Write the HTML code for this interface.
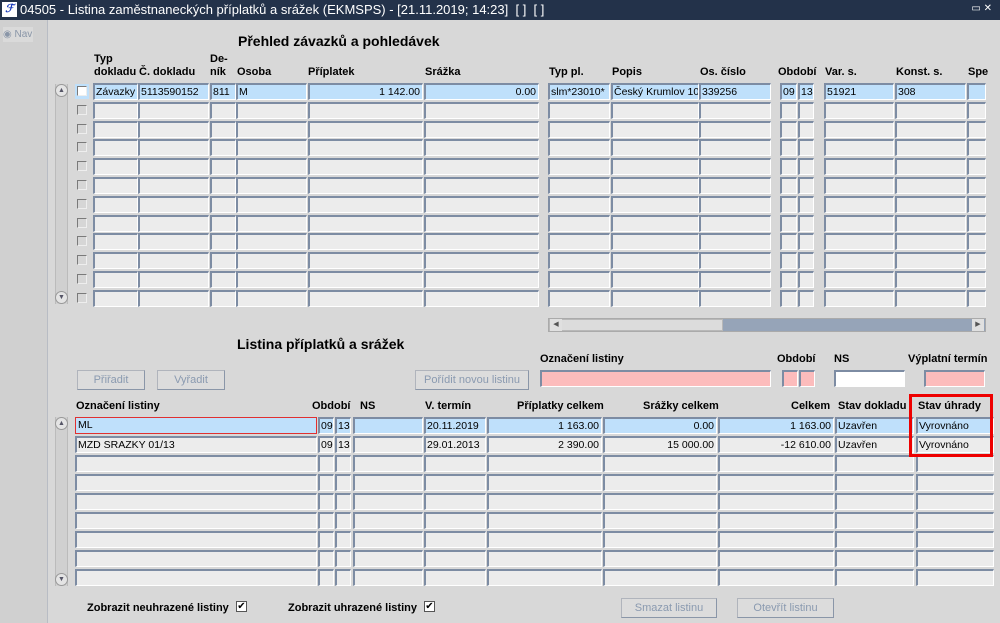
<!DOCTYPE html>
<html><head><meta charset="utf-8">
<style>
*{box-sizing:border-box;margin:0;padding:0}
body{width:1000px;height:623px;overflow:hidden;background:#d8d8d8;font-family:"Liberation Sans",Arial,sans-serif;font-size:11px;color:#000;position:relative}
.a{position:absolute}
#tb{left:0;top:0;width:1000px;height:20px;background:#23324a;color:#fff;font-size:13px;line-height:20px;padding-left:20px}
#lp{left:0;top:20px;width:48px;height:603px;background:#d0d0d0;border-right:1px solid #b8bcc4}
.f{position:absolute;height:17px;background:#ececec;border-top:2px solid #7d8ca3;border-left:2px solid #7d8ca3;border-bottom:1px solid #fff;border-right:1px solid #fff;font-size:10.5px;line-height:14px;padding-left:1px;white-space:nowrap;overflow:hidden}
.s{background:#bfe0fb}
.r{text-align:right;padding-right:2px}
.h{position:absolute;font-weight:bold;font-size:11px;line-height:13px}
.cb{position:absolute;width:10px;height:10px;border:1px solid #7a7a7a;border-right-color:#eee;border-bottom-color:#eee;background:#d6d6d6}
.btn{position:absolute;height:20px;border:1px solid #b0b4bc;border-right-color:#8a96a8;border-bottom-color:#8a96a8;background:#dcdcdc;color:#8a9ab0;text-align:center;line-height:18px;font-size:11px}
.sb{position:absolute;width:13px;background:#d0d0d0;border-left:1px solid #bbb;border-right:1px solid #bbb}
.ar{position:absolute;left:-1px;width:13px;height:13px;border-radius:7px;background:#e4e4e4;border:1px solid #999;font-size:7px;line-height:11px;text-align:center;color:#556}
.t{position:absolute;font-weight:bold;font-size:14px}
</style></head><body>
<div id="tb" class="a">04505 - Listina zaměstnaneckých příplatků a srážek (EKMSPS) - [21.11.2019; 14:23]&nbsp; [ ]&nbsp; [ ]</div>
<div class="a" style="left:2px;top:2px;width:15px;height:15px;background:#fff;color:#1a3bbb;font-weight:bold;font-style:italic;font-size:11px;line-height:15px;text-align:center">ℱ</div>
<div class="a" style="right:8px;top:3px;color:#fff;font-size:10px">▭ ✕</div>
<div id="lp" class="a"></div>
<div class="a" style="left:3px;top:27px;width:30px;height:15px;background:#dadada;color:#8a96a8;font-size:10px;line-height:15px">◉ Nav</div>

<div class="t" style="left:238px;top:33px">Přehled závazků a pohledávek</div>
<div class="h" style="left:94px;top:53px">Typ<br>dokladu</div>
<div class="h" style="left:139px;top:66px">Č. dokladu</div>
<div class="h" style="left:210px;top:53px">De-<br>ník</div>
<div class="h" style="left:237px;top:66px">Osoba</div>
<div class="h" style="left:308px;top:66px">Příplatek</div>
<div class="h" style="left:425px;top:66px">Srážka</div>
<div class="h" style="left:549px;top:66px">Typ pl.</div>
<div class="h" style="left:612px;top:66px">Popis</div>
<div class="h" style="left:700px;top:66px">Os. číslo</div>
<div class="h" style="left:778px;top:66px">Období</div>
<div class="h" style="left:825px;top:66px">Var. s.</div>
<div class="h" style="left:896px;top:66px">Konst. s.</div>
<div class="h" style="left:968px;top:66px">Spe</div>

<div class="f s" style="left:93px;top:83px;width:45px">Závazky</div>
<div class="f s" style="left:138px;top:83px;width:71px">5113590152</div>
<div class="f s" style="left:210px;top:83px;width:26px">811</div>
<div class="f s" style="left:236px;top:83px;width:71px">M</div>
<div class="f s r" style="left:308px;top:83px;width:115px">1 142.00</div>
<div class="f s r" style="left:424px;top:83px;width:115px">0.00</div>
<div class="f s" style="left:548px;top:83px;width:62px">slm*23010*</div>
<div class="f s" style="left:611px;top:83px;width:88px">Český Krumlov 10-</div>
<div class="f s" style="left:699px;top:83px;width:72px">339256</div>
<div class="f s" style="left:780px;top:83px;width:17px">09</div>
<div class="f s" style="left:798px;top:83px;width:16px">13</div>
<div class="f s" style="left:824px;top:83px;width:70px">51921</div>
<div class="f s" style="left:895px;top:83px;width:71px">308</div>
<div class="f s" style="left:967px;top:83px;width:19px"></div>
<div class="a" style="left:75px;top:84px;width:14px;height:15px;background:#bfe0fb"></div>
<div class="cb" style="left:77px;top:86px;background:#fff"></div>
<div id="g1"></div>

<div class="sb" style="left:55px;top:84px;height:220px"><div class="ar" style="top:0">▲</div><div class="ar" style="bottom:0">▼</div></div>

<div class="a" style="left:548px;top:318px;width:438px;height:14px;background:#96a4b8;border:1px solid #aaa"></div>
<div class="a" style="left:549px;top:319px;width:174px;height:12px;background:#dcdcdc;border:1px solid #b8b8b8"></div>
<div class="a" style="left:550px;top:319px;width:12px;height:12px;background:#e0e0e0;font-size:7px;text-align:center;line-height:12px;color:#555">◀</div>
<div class="a" style="left:972px;top:319px;width:12px;height:12px;background:#e0e0e0;font-size:7px;text-align:center;line-height:12px;color:#555">▶</div>

<div class="t" style="left:237px;top:336px">Listina příplatků a srážek</div>
<div class="h" style="left:540px;top:353px">Označení listiny</div>
<div class="h" style="left:777px;top:353px">Období</div>
<div class="h" style="left:834px;top:353px">NS</div>
<div class="h" style="left:908px;top:353px">Výplatní termín</div>
<div class="btn" style="left:77px;top:370px;width:68px">Přiřadit</div>
<div class="btn" style="left:157px;top:370px;width:68px">Vyřadit</div>
<div class="btn" style="left:415px;top:370px;width:114px">Pořídit novou listinu</div>
<div class="f" style="left:540px;top:370px;width:231px;background:#fcbcbc"></div>
<div class="f" style="left:782px;top:370px;width:16px;background:#fcbcbc"></div>
<div class="f" style="left:799px;top:370px;width:16px;background:#fcbcbc"></div>
<div class="f" style="left:834px;top:370px;width:71px;background:#fff"></div>
<div class="f" style="left:924px;top:370px;width:61px;background:#fcbcbc"></div>

<div class="h" style="left:76px;top:400px">Označení listiny</div>
<div class="h" style="left:312px;top:400px">Období</div>
<div class="h" style="left:360px;top:400px">NS</div>
<div class="h" style="left:425px;top:400px">V. termín</div>
<div class="h" style="left:517px;top:400px">Příplatky celkem</div>
<div class="h" style="left:643px;top:400px">Srážky celkem</div>
<div class="h" style="left:791px;top:400px">Celkem</div>
<div class="h" style="left:838px;top:400px">Stav dokladu</div>
<div class="h" style="left:918px;top:400px">Stav úhrady</div>

<div class="f s" style="left:75px;top:417px;width:242px;border:1px solid #e03030;padding-left:2px">ML</div>
<div class="f s" style="left:318px;top:417px;width:16px">09</div>
<div class="f s" style="left:335px;top:417px;width:16px">13</div>
<div class="f s" style="left:353px;top:417px;width:70px"></div>
<div class="f s" style="left:424px;top:417px;width:62px">20.11.2019</div>
<div class="f s r" style="left:487px;top:417px;width:115px">1 163.00</div>
<div class="f s r" style="left:603px;top:417px;width:114px">0.00</div>
<div class="f s r" style="left:718px;top:417px;width:116px">1 163.00</div>
<div class="f s" style="left:835px;top:417px;width:79px">Uzavřen</div>
<div class="f s" style="left:916px;top:417px;width:78px">Vyrovnáno</div>

<div class="f" style="left:75px;top:436px;width:242px">MZD SRAZKY 01/13</div>
<div class="f" style="left:318px;top:436px;width:16px">09</div>
<div class="f" style="left:335px;top:436px;width:16px">13</div>
<div class="f" style="left:353px;top:436px;width:70px"></div>
<div class="f" style="left:424px;top:436px;width:62px">29.01.2013</div>
<div class="f r" style="left:487px;top:436px;width:115px">2 390.00</div>
<div class="f r" style="left:603px;top:436px;width:114px">15 000.00</div>
<div class="f r" style="left:718px;top:436px;width:116px">-12 610.00</div>
<div class="f" style="left:835px;top:436px;width:79px">Uzavřen</div>
<div class="f" style="left:916px;top:436px;width:78px">Vyrovnáno</div>
<div id="g2"></div>

<div class="a" style="left:909px;top:394px;width:84px;height:63px;border:3px solid #ee0000"></div>
<div class="sb" style="left:55px;top:417px;height:169px"><div class="ar" style="top:0">▲</div><div class="ar" style="bottom:0">▼</div></div>

<div class="h" style="left:87px;top:602px">Zobrazit neuhrazené listiny</div>
<div class="a" style="left:236px;top:601px;width:11px;height:11px;background:#fff;border:1px solid #555;font-size:10px;line-height:9px;text-align:center">✔</div>
<div class="h" style="left:288px;top:602px">Zobrazit uhrazené listiny</div>
<div class="a" style="left:424px;top:601px;width:11px;height:11px;background:#fff;border:1px solid #555;font-size:10px;line-height:9px;text-align:center">✔</div>
<div class="btn" style="left:621px;top:598px;width:96px">Smazat listinu</div>
<div class="btn" style="left:737px;top:598px;width:97px">Otevřít listinu</div>

<script>
var c1=[[93,45],[138,71],[210,26],[236,71],[308,115],[424,115],[548,62],[611,88],[699,72],[780,17],[798,16],[824,70],[895,71],[967,19]];
var h='';
for(var i=1;i<12;i++){var y=Math.round(83+i*18.8);
h+='<div class="cb" style="left:77px;top:'+(y+3)+'px"></div>';
c1.forEach(function(c){h+='<div class="f" style="left:'+c[0]+'px;top:'+y+'px;width:'+c[1]+'px"></div>';});}
document.getElementById('g1').innerHTML=h;
var c2=[[75,242],[318,16],[335,16],[353,70],[424,62],[487,115],[603,114],[718,116],[835,79],[916,78]];
h='';
for(var i=2;i<9;i++){var y=417+i*19;
c2.forEach(function(c){h+='<div class="f" style="left:'+c[0]+'px;top:'+y+'px;width:'+c[1]+'px"></div>';});}
document.getElementById('g2').innerHTML=h;
</script>
</body></html>
